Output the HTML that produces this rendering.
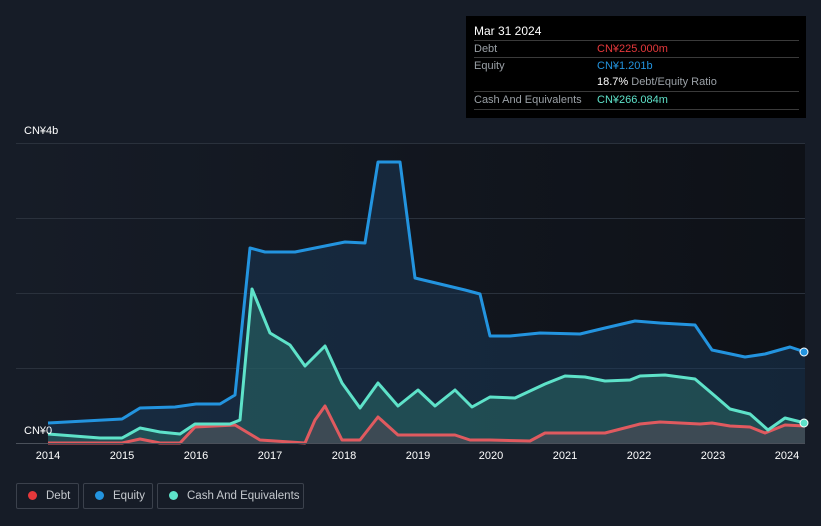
<!DOCTYPE html><html><head><style>
body{margin:0;width:821px;height:526px;background:#161c27;font-family:"Liberation Sans",sans-serif;overflow:hidden;position:relative}
.tt{position:absolute;left:466px;top:16px;width:340px;height:102px;background:#000;color:#fff;font-size:11px}
.tt .r{position:absolute;left:8px;width:325px;border-top:1px solid #3a3a3a;height:17px;line-height:17px;color:#9aa0a6}
.tt .v{position:absolute;left:123px}
.leg{position:absolute;top:483px;height:26px;border:1px solid #3b414c;border-radius:2px;color:#c5c9ce;font-size:11.5px;line-height:24px;box-sizing:border-box;white-space:nowrap}
.leg i{display:inline-block;width:9px;height:9px;border-radius:50%;margin:0 9px 0 11px;vertical-align:-1px}
.ax{position:absolute;top:450px;color:#fff;font-size:11px;width:40px;text-align:center}
</style></head><body>
<svg width="821" height="526" style="position:absolute;left:0;top:0">
<defs><linearGradient id="bg" x1="0" x2="1"><stop offset="0" stop-color="#161c27"/><stop offset="1" stop-color="#0e1117"/></linearGradient></defs>
<rect x="16" y="143" width="789" height="300" fill="url(#bg)"/>
<g stroke="#2a313c" stroke-width="1"><line x1="16" y1="143.5" x2="805" y2="143.5"/><line x1="16" y1="218.5" x2="805" y2="218.5"/><line x1="16" y1="293.5" x2="805" y2="293.5"/><line x1="16" y1="368.5" x2="805" y2="368.5"/></g>
<path d="M48,423 L122,419 L140,408 L175,407 L196,404 L220,404 L235,395 L250,248 L265,252 L295,252 L325,246 L345,242 L365,243 L378,162 L400,162 L415,278 L440,284 L465,290 L480,294 L490,336 L510,336 L540,333 L580,334 L605,328 L635,321 L660,323 L695,325 L712,350 L745,357 L765,354 L790,347 L805,352 L805,443 L48,443Z" fill="#1a3a5a" fill-opacity=".5"/>
<path d="M48,434 L100,438 L122,438 L140,428 L160,432 L180,434 L195,424 L230,424 L240,420 L252,289 L270,333 L290,345 L305,366 L325,346 L342,383 L360,408 L378,383 L398,406 L418,390 L435,406 L455,390 L472,407 L490,397 L515,398 L545,384 L565,376 L585,377 L605,381 L630,380 L640,376 L665,375 L695,379 L715,396 L730,409 L750,414 L768,430 L785,418 L805,423 L805,443 L48,443Z" fill="#2a6a66" fill-opacity=".55"/>
<path d="M48,443 L122,443 L140,439 L160,443 L180,443 L195,427 L235,425 L260,440 L305,443 L315,420 L325,406 L342,440 L360,440 L378,417 L398,435 L455,435 L470,440 L490,440 L530,441 L545,433 L605,433 L640,424 L660,422 L700,424 L712,423 L730,426 L750,427 L765,433 L785,425 L805,426 L805,443Z" fill="#4a4a55" fill-opacity=".7"/>
<g fill="none" stroke-width="3" stroke-linejoin="round">
<path d="M48,423 L122,419 L140,408 L175,407 L196,404 L220,404 L235,395 L250,248 L265,252 L295,252 L325,246 L345,242 L365,243 L378,162 L400,162 L415,278 L440,284 L465,290 L480,294 L490,336 L510,336 L540,333 L580,334 L605,328 L635,321 L660,323 L695,325 L712,350 L745,357 L765,354 L790,347 L805,352" stroke="#2394df"/>
<path d="M48,443 L122,443 L140,439 L160,443 L180,443 L195,427 L235,425 L260,440 L305,443 L315,420 L325,406 L342,440 L360,440 L378,417 L398,435 L455,435 L470,440 L490,440 L530,441 L545,433 L605,433 L640,424 L660,422 L700,424 L712,423 L730,426 L750,427 L765,433 L785,425 L805,426" stroke="#e05a5f"/>
<path d="M48,434 L100,438 L122,438 L140,428 L160,432 L180,434 L195,424 L230,424 L240,420 L252,289 L270,333 L290,345 L305,366 L325,346 L342,383 L360,408 L378,383 L398,406 L418,390 L435,406 L455,390 L472,407 L490,397 L515,398 L545,384 L565,376 L585,377 L605,381 L630,380 L640,376 L665,375 L695,379 L715,396 L730,409 L750,414 L768,430 L785,418 L805,423" stroke="#5ee2c9"/>
</g>
<line x1="16" y1="443.5" x2="805" y2="443.5" stroke="#4a505a"/>
<circle cx="804" cy="352" r="4" fill="#2394df" stroke="#fff" stroke-width="1"/>
<circle cx="804" cy="423" r="4" fill="#5ee2c9" stroke="#fff" stroke-width="1"/>
</svg>
<div style="position:absolute;left:24px;top:125px;color:#fff;font-size:11px">CN¥4b</div>
<div style="position:absolute;left:24px;top:425px;color:#fff;font-size:11px">CN¥0</div>
<div class="ax" style="left:28px">2014</div><div class="ax" style="left:102px">2015</div><div class="ax" style="left:176px">2016</div><div class="ax" style="left:250px">2017</div><div class="ax" style="left:324px">2018</div><div class="ax" style="left:398px">2019</div><div class="ax" style="left:471px">2020</div><div class="ax" style="left:545px">2021</div><div class="ax" style="left:619px">2022</div><div class="ax" style="left:693px">2023</div><div class="ax" style="left:767px">2024</div>
<div class="tt">
<div style="position:absolute;left:8px;top:8px;font-size:12px">Mar 31 2024</div>
<div class="r" style="top:24px">Debt<span class="v" style="color:#e5383b">CN¥225.000m</span></div>
<div class="r" style="top:41px">Equity<span class="v" style="color:#2394df">CN¥1.201b</span></div>
<div class="r" style="top:58px;border-top:none"><span class="v" style="color:#fff">18.7% <span style="color:#9aa0a6">Debt/Equity Ratio</span></span></div>
<div class="r" style="top:75px">Cash And Equivalents<span class="v" style="color:#5ee2c9">CN¥266.084m</span></div>
<div class="r" style="top:93px;height:0"></div>
</div>
<div class="leg" style="left:16px;width:63px"><i style="background:#e5383b"></i>Debt</div>
<div class="leg" style="left:83px;width:70px"><i style="background:#2394df"></i>Equity</div>
<div class="leg" style="left:157px;width:147px"><i style="background:#5ee2c9"></i>Cash And Equivalents</div>
</body></html>
